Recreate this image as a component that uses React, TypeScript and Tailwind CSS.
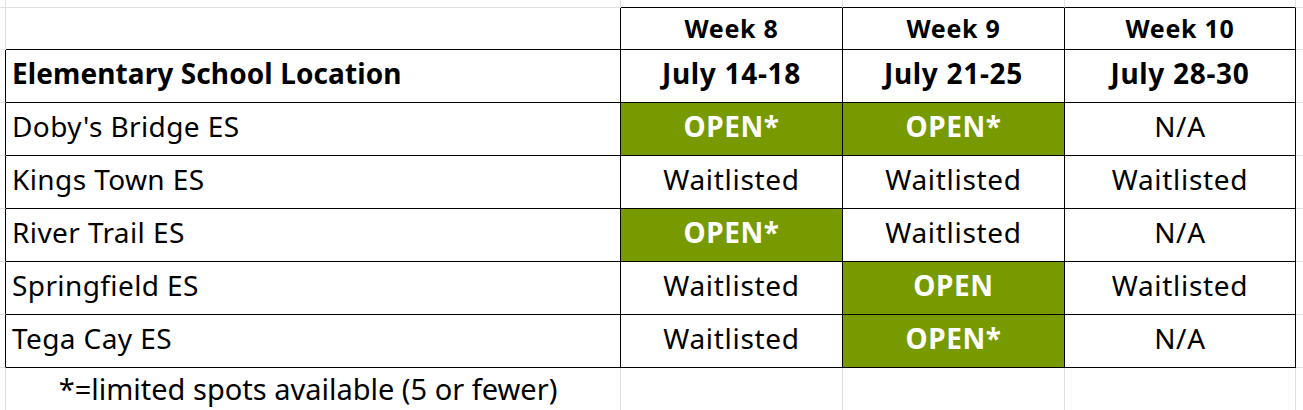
import React from "react";

type Cell = { text: string; kind: "wait" | "open" | "na" };

const rows: { name: string; cells: Cell[] }[] = [
  { name: "Doby's Bridge ES", cells: [{ text: "OPEN*", kind: "open" }, { text: "OPEN*", kind: "open" }, { text: "N/A", kind: "na" }] },
  { name: "Kings Town ES", cells: [{ text: "Waitlisted", kind: "wait" }, { text: "Waitlisted", kind: "wait" }, { text: "Waitlisted", kind: "wait" }] },
  { name: "River Trail ES", cells: [{ text: "OPEN*", kind: "open" }, { text: "Waitlisted", kind: "wait" }, { text: "N/A", kind: "na" }] },
  { name: "Springfield ES", cells: [{ text: "Waitlisted", kind: "wait" }, { text: "OPEN", kind: "open" }, { text: "Waitlisted", kind: "wait" }] },
  { name: "Tega Cay ES", cells: [{ text: "Waitlisted", kind: "wait" }, { text: "OPEN*", kind: "open" }, { text: "N/A", kind: "na" }] },
];

const G = "border-[#e1e1e1]";

export default function App() {
  return (
    <div className="w-[1303px] h-[410px] bg-white overflow-hidden font-['Noto_Sans',sans-serif] text-black">
      <div className="grid grid-cols-[6px_615px_222px_222px_231px_1fr] grid-rows-[8px_42px_53px_53px_53px_53px_53px_53px_42px]">
        {/* row 0 */}
        <div className={`border-r border-b ${G}`} />
        <div className={`border-r border-b ${G}`} />
        <div className={`border-r border-b ${G} border-b-black`} />
        <div className={`border-r border-b ${G} border-b-black`} />
        <div className={`border-r border-b ${G} border-b-black`} />
        <div className={`border-b ${G}`} />

        {/* row 1: weeks */}
        <div className={`border-r border-b ${G}`} />
        <div className="border-r border-b border-black" />
        {["Week 8", "Week 9", "Week 10"].map((w) => (
          <div key={w} className="border-r border-b border-black flex items-center justify-center text-[25px] font-bold leading-none tracking-[0.7px] pb-[1px]">
            {w}
          </div>
        ))}
        <div className={`border-b ${G}`} />

        {/* row 2: dates */}
        <div className={`border-r border-b ${G} border-r-black`} />
        <div className="border-r border-b border-black flex items-center pl-[6px] text-[28px] font-bold leading-none tracking-[0.1px] pb-[6px]">
          Elementary School Location
        </div>
        {["July 14-18", "July 21-25", "July 28-30"].map((w) => (
          <div key={w} className="border-r border-b border-black flex items-center justify-center text-[28px] font-bold leading-none tracking-[0.7px] pb-[6px]">
            {w}
          </div>
        ))}
        <div className={`border-b ${G}`} />

        {rows.map((r) => (
          <React.Fragment key={r.name}>
            <div className={`border-r border-b ${G} border-r-black`} />
            <div className="border-r border-b border-black flex items-center pl-[6px] text-[28px] leading-none tracking-[0.4px] pb-[6px]">
              {r.name}
            </div>
            {r.cells.map((c, i) => (
              <div
                key={i}
                className={
                  c.kind === "open"
                    ? "border-r border-b border-black bg-[#789a01] text-white font-bold flex items-center justify-center text-[28px] leading-none tracking-[0.6px] pb-[6px]"
                    : "border-r border-b border-black flex items-center justify-center text-[28px] leading-none tracking-[0.7px] pb-[6px]"
                }
              >
                {c.text}
              </div>
            ))}
            <div className={`border-b ${G}`} />
          </React.Fragment>
        ))}

        {/* footer */}
        <div className={`border-r ${G}`} />
        <div className={`border-r ${G} flex items-center justify-center text-[29px] leading-none pb-[2px] pr-[10px]`}>
          *=limited spots available (5 or fewer)
        </div>
        <div className={`border-r ${G}`} />
        <div className={`border-r ${G}`} />
        <div className={`border-r ${G}`} />
        <div />
      </div>
    </div>
  );
}
